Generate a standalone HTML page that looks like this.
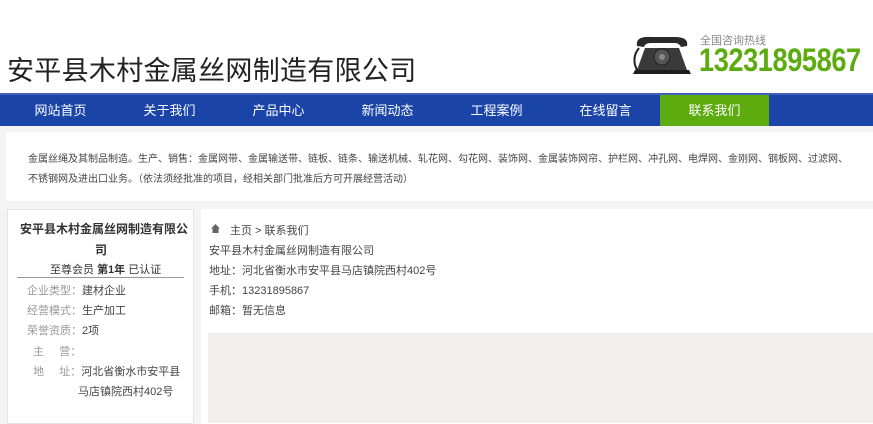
<!DOCTYPE html>
<html><head><meta charset="utf-8"><style>
*{margin:0;padding:0;box-sizing:border-box}
body{width:873px;height:420px;overflow:hidden;background:#f4f4f4;font-family:"Liberation Sans","Noto Sans CJK SC",sans-serif;position:relative}
.hdr{position:absolute;left:0;top:0;width:873px;height:93px;background:#fff}
.title{position:absolute;left:7px;top:49px;font-size:27px;color:#222;white-space:nowrap;letter-spacing:0.3px}
.hot{position:absolute;left:700px;top:32px;font-size:11px;color:#888}
.tel{position:absolute;left:699px;top:42px;font-size:32px;font-weight:bold;color:#5cab0f;letter-spacing:-0.5px;transform:scaleX(0.85);transform-origin:left}
.nav{position:absolute;left:0;top:93px;width:873px;height:33px;background:#1a44a8;border-top:2px solid #3f63b8}
.nav span{position:absolute;top:0;height:31px;line-height:31px;color:#fff;font-size:13px;text-align:center;width:109px}
.intro{position:absolute;left:6px;top:132px;width:867px;height:69px;background:#fff;font-size:10px;color:#444;padding:18px 0 0 22px;line-height:20px}
.lp{position:absolute;left:7px;top:209px;width:187px;height:215px;background:#fff;border:1px solid #e4e4e4}
.rp{position:absolute;left:201px;top:209px;width:672px;height:215px;background:#fff}
.map{position:absolute;left:208px;top:333px;width:665px;height:90px;background:#f0efeb}
.t{position:absolute;font-size:11px;color:#444;white-space:nowrap}
.g{color:#999}
</style></head><body>
<div class="hdr">
<div class="title">安平县木村金属丝网制造有限公司</div>
<svg style="position:absolute;left:631px;top:34px" width="62" height="42" viewBox="0 0 62 42">
<path d="M6 12 Q4 2 20 3 L44 3 Q58 3 56 12 L50 13 Q48 9 44 9 L20 9 Q14 9 13 13 Z" fill="#2a2a2a"/>
<path d="M14 14 L48 14 L56 36 L6 36 Z" fill="#3a3a3a"/>
<circle cx="31" cy="23" r="8" fill="#555" stroke="#222"/>
<circle cx="31" cy="23" r="3" fill="#888"/>
<path d="M4 36 L58 36 L60 40 L2 40 Z" fill="#1e1e1e"/>
<path d="M8 14 Q0 24 6 36" stroke="#222" stroke-width="2" fill="none"/>
</svg>
<div class="hot">全国咨询热线</div>
<div class="tel">13231895867</div>
</div>
<div class="nav">
<span style="left:6px">网站首页</span>
<span style="left:115px">关于我们</span>
<span style="left:224px">产品中心</span>
<span style="left:333px">新闻动态</span>
<span style="left:442px">工程案例</span>
<span style="left:551px">在线留言</span>
<span style="left:660px;background:#5cab0f">联系我们</span>
</div>
<div class="intro">金属丝绳及其制品制造。生产、销售：金属网带、金属输送带、链板、链条、输送机械、轧花网、勾花网、装饰网、金属装饰网帘、护栏网、冲孔网、电焊网、金刚网、钢板网、过滤网、<br>不锈钢网及进出口业务。（依法须经批准的项目，经相关部门批准后方可开展经营活动）</div>
<div class="lp">
<div class="t" style="left:12px;top:10px;font-size:12px;font-weight:bold;color:#333">安平县木村金属丝网制造有限公</div>
<div class="t" style="left:87px;top:31px;font-size:12px;font-weight:bold;color:#333">司</div>
<div class="t" style="left:42px;top:51px;color:#333">至尊会员 <b>第1年</b> 已认证</div>
<div style="position:absolute;left:9px;top:67px;width:167px;height:1px;background:#999"></div>
<div class="t" style="left:19px;top:72px"><span class="g">企业类型：</span>建材企业</div>
<div class="t" style="left:19px;top:92px"><span class="g">经营模式：</span>生产加工</div>
<div class="t" style="left:19px;top:112px"><span class="g">荣誉资质：</span>2项</div>
<div class="t" style="left:25px;top:133px"><span class="g">主&nbsp;&nbsp;&nbsp;&nbsp;&nbsp;营：</span></div>
<div class="t" style="left:25px;top:153px"><span class="g">地&nbsp;&nbsp;&nbsp;&nbsp;&nbsp;址：</span>河北省衡水市安平县</div>
<div class="t" style="left:70px;top:173px">马店镇院西村402号</div>
</div>
<div class="rp">
<svg style="position:absolute;left:10px;top:15px" width="9" height="9" viewBox="0 0 9 9"><path d="M4.5 0 L9 4.5 L7.5 4.5 L7.5 9 L1.5 9 L1.5 4.5 L0 4.5 Z" fill="#666"/></svg>
<div class="t" style="left:29px;top:13px">主页 &gt; 联系我们</div>
<div class="t" style="left:8px;top:33px">安平县木村金属丝网制造有限公司</div>
<div class="t" style="left:8px;top:53px">地址：河北省衡水市安平县马店镇院西村402号</div>
<div class="t" style="left:8px;top:73px">手机：13231895867</div>
<div class="t" style="left:8px;top:93px">邮箱：暂无信息</div>
</div>
<div class="map"></div>
</body></html>
